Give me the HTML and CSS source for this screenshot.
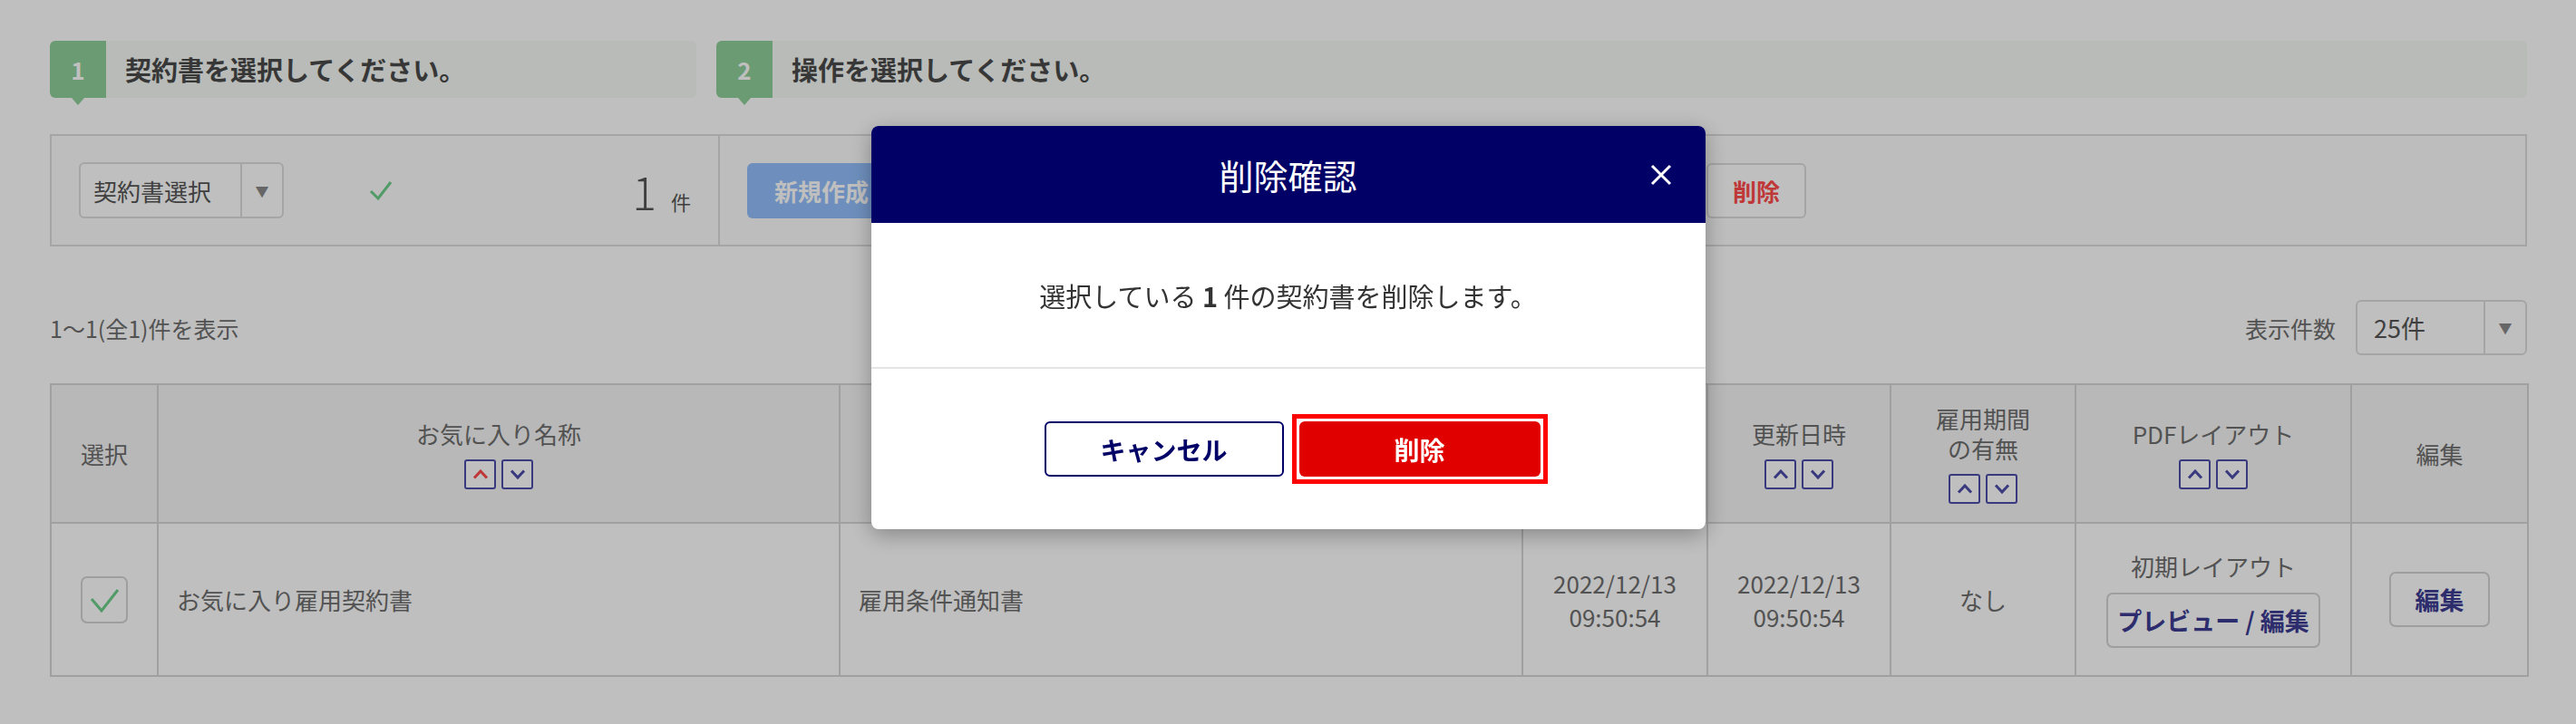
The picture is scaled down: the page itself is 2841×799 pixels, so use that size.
FILE: index.html
```html
<!DOCTYPE html>
<html lang="ja">
<head>
    <meta charset="UTF-8">
    <meta name="viewport" content="width=device-width, initial-scale=1.0">
    <title>契約書一覧</title>
    <link rel="stylesheet" href="styles.css">
</head>
<body>
    <div class="page">
        <div class="steps">
            <div class="step step-first">
                <span class="step-num">1</span>
                <span class="step-label">契約書を選択してください。</span>
            </div>
            <div class="step step-second">
                <span class="step-num">2</span>
                <span class="step-label">操作を選択してください。</span>
            </div>
        </div>

        <div class="op-panel">
            <div class="select-area">
                <div class="select-box doc-select">
                    <span class="select-text">契約書選択</span>
                    <span class="select-caret">&#9660;</span>
                </div>
                <svg class="selected-check" width="28" height="24" viewBox="0 0 28 24">
                    <polyline points="3,13 11,21 25,3" fill="none" stroke="#6ccf8a" stroke-width="3"/>
                </svg>
                <div class="count">
                    <span class="count-num">1</span>
                    <span class="count-unit">件</span>
                </div>
            </div>
            <div class="action-area">
                <button class="op-btn op-new">新規作成</button>
                <!-- buttons behind the dialog -->
                <button class="op-btn op-hidden"></button>
                <button class="op-btn op-hidden"></button>
                <button class="op-btn op-hidden"></button>
                <button class="op-btn op-delete">削除</button>
            </div>
        </div>

        <div class="list-info">
            <span>1～1(全1)件を表示</span>
            <div class="per-page">
                <span>表示件数</span>
                <div class="select-box page-select">
                    <span class="select-text">25件</span>
                    <span class="select-caret">&#9660;</span>
                </div>
            </div>
        </div>

        <table class="doc-table">
            <colgroup>
                <col style="width: 118px">
                <col style="width: 752px">
                <col style="width: 753px">
                <col style="width: 204px">
                <col style="width: 202px">
                <col style="width: 204px">
                <col style="width: 304px">
                <col style="width: 195px">
            </colgroup>
            <thead>
                <tr>
                    <th>選択</th>
                    <th>
                        <div class="head-label">お気に入り名称</div>
                        <div class="sort">
                            <span class="sort-btn"><svg width="18" height="11" viewBox="0 0 18 11"><polyline points="2,9.5 9,2 16,9.5" fill="none" stroke="#ff4a4a" stroke-width="3"/></svg></span>
                            <span class="sort-btn"><svg width="18" height="11" viewBox="0 0 18 11"><polyline points="2,1.5 9,9 16,1.5" fill="none" stroke="#4d4daa" stroke-width="3"/></svg></span>
                        </div>
                    </th>
                    <th>
                        <div class="head-label">契約書名</div>
                        <div class="sort">
                            <span class="sort-btn"><svg width="18" height="11" viewBox="0 0 18 11"><polyline points="2,9.5 9,2 16,9.5" fill="none" stroke="#4d4daa" stroke-width="3"/></svg></span>
                            <span class="sort-btn"><svg width="18" height="11" viewBox="0 0 18 11"><polyline points="2,1.5 9,9 16,1.5" fill="none" stroke="#4d4daa" stroke-width="3"/></svg></span>
                        </div>
                    </th>
                    <th>
                        <div class="head-label">作成日時</div>
                        <div class="sort">
                            <span class="sort-btn"><svg width="18" height="11" viewBox="0 0 18 11"><polyline points="2,9.5 9,2 16,9.5" fill="none" stroke="#4d4daa" stroke-width="3"/></svg></span>
                            <span class="sort-btn"><svg width="18" height="11" viewBox="0 0 18 11"><polyline points="2,1.5 9,9 16,1.5" fill="none" stroke="#4d4daa" stroke-width="3"/></svg></span>
                        </div>
                    </th>
                    <th>
                        <div class="head-label">更新日時</div>
                        <div class="sort">
                            <span class="sort-btn"><svg width="18" height="11" viewBox="0 0 18 11"><polyline points="2,9.5 9,2 16,9.5" fill="none" stroke="#4d4daa" stroke-width="3"/></svg></span>
                            <span class="sort-btn"><svg width="18" height="11" viewBox="0 0 18 11"><polyline points="2,1.5 9,9 16,1.5" fill="none" stroke="#4d4daa" stroke-width="3"/></svg></span>
                        </div>
                    </th>
                    <th>
                        <div class="head-label">雇用期間<br>の有無</div>
                        <div class="sort">
                            <span class="sort-btn"><svg width="18" height="11" viewBox="0 0 18 11"><polyline points="2,9.5 9,2 16,9.5" fill="none" stroke="#4d4daa" stroke-width="3"/></svg></span>
                            <span class="sort-btn"><svg width="18" height="11" viewBox="0 0 18 11"><polyline points="2,1.5 9,9 16,1.5" fill="none" stroke="#4d4daa" stroke-width="3"/></svg></span>
                        </div>
                    </th>
                    <th>
                        <div class="head-label">PDFレイアウト</div>
                        <div class="sort">
                            <span class="sort-btn"><svg width="18" height="11" viewBox="0 0 18 11"><polyline points="2,9.5 9,2 16,9.5" fill="none" stroke="#4d4daa" stroke-width="3"/></svg></span>
                            <span class="sort-btn"><svg width="18" height="11" viewBox="0 0 18 11"><polyline points="2,1.5 9,9 16,1.5" fill="none" stroke="#4d4daa" stroke-width="3"/></svg></span>
                        </div>
                    </th>
                    <th>編集</th>
                </tr>
            </thead>
            <tbody>
                <tr>
                    <td>
                        <span class="check-box">
                            <svg width="34" height="28" viewBox="0 0 34 28"><polyline points="3,13 14,26 32,3" fill="none" stroke="#6ccf8a" stroke-width="3"/></svg>
                        </span>
                    </td>
                    <td class="cell-left">お気に入り雇用契約書</td>
                    <td class="cell-left">雇用条件通知書</td>
                    <td class="cell-date">2022/12/13<br>09:50:54</td>
                    <td class="cell-date">2022/12/13<br>09:50:54</td>
                    <td>なし</td>
                    <td>
                        <div class="layout-name">初期レイアウト</div>
                        <button class="row-btn preview-btn">プレビュー / 編集</button>
                    </td>
                    <td><button class="row-btn edit-btn">編集</button></td>
                </tr>
            </tbody>
        </table>
    </div>

    <div class="overlay"></div>

    <div class="modal">
        <div class="modal-head">
            <span class="modal-title">削除確認</span>
            <svg class="modal-close" width="24" height="24" viewBox="0 0 24 24">
                <path d="M2 2 L22 22 M22 2 L2 22" stroke="#fff" stroke-width="3" fill="none"/>
            </svg>
        </div>
        <div class="modal-body">
            <p>選択している <b>1</b> 件の契約書を削除します。</p>
        </div>
        <div class="modal-foot">
            <button class="btn-cancel">キャンセル</button>
            <span class="highlight"><button class="btn-delete">削除</button></span>
        </div>
    </div>
</body>
</html>
```

FILE: styles.css
```css
body {
    margin: 0;
    background: #fff;
    font-family: "Noto Sans CJK JP", "Noto Sans", sans-serif;
    color: #6e6e6e;
}

.page {
    padding: 45px 54px 0 55px;
}

/* step bars */
.steps {
    display: flex;
    gap: 22px;
}

.step {
    display: flex;
    align-items: center;
    height: 63px;
    background: #f6faf6;
    border-radius: 6px;
}

.step-first {
    width: 713px;
}

.step-second {
    flex: 1;
}

.step-num {
    position: relative;
    width: 62px;
    height: 100%;
    display: flex;
    align-items: center;
    justify-content: center;
    background: #8fcf98;
    color: #fff;
    font-size: 26px;
    font-weight: bold;
    border-radius: 6px 0 0 6px;
}

.step-num::after {
    content: "";
    position: absolute;
    left: 50%;
    bottom: -8px;
    margin-left: -7px;
    border-left: 7px solid transparent;
    border-right: 7px solid transparent;
    border-top: 8px solid #8fcf98;
}

.step-label {
    margin-left: 21px;
    font-size: 29px;
    line-height: 1.2;
    font-weight: bold;
    color: #4a4a4a;
}

/* operation panel */
.op-panel {
    display: flex;
    margin-top: 40px;
    height: 120px;
    border: 2px solid #dcdcdc;
    background: #fcfcfc;
}

.select-area {
    box-sizing: border-box;
    width: 737px;
    display: flex;
    align-items: center;
    padding: 0 30px;
    border-right: 2px solid #dcdcdc;
}

.select-box {
    box-sizing: border-box;
    display: flex;
    height: 62px;
    border: 2px solid #dcdcdc;
    border-radius: 6px;
    background: #fff;
}

.select-text {
    flex: 1;
    display: flex;
    align-items: center;
    padding-left: 14px;
    font-size: 26px;
    color: #555;
}

.select-caret {
    width: 44px;
    display: flex;
    align-items: center;
    justify-content: center;
    border-left: 2px solid #dcdcdc;
    color: #888;
    font-size: 15px;
}

.doc-select {
    width: 226px;
}

.selected-check {
    margin-left: 93px;
}

.count {
    margin-left: auto;
    display: flex;
    align-items: baseline;
    color: #555;
    line-height: 1;
}

.count-num {
    font-size: 50px;
    font-weight: 300;
}

.count-unit {
    margin-left: 16px;
    font-size: 22px;
}

.action-area {
    display: flex;
    align-items: center;
    gap: 15px;
    padding-left: 30px;
}

.op-btn {
    height: 61px;
    border: 2px solid #dcdcdc;
    border-radius: 6px;
    background: #fff;
    font-family: inherit;
    font-size: 26px;
    font-weight: bold;
    color: #555;
}

.op-new {
    width: 164px;
    border: none;
    background: #93bffd;
    color: #fff;
}

.op-hidden {
    width: 278px;
}

.op-delete {
    width: 110px;
    color: #ff4a4a;
}

/* list info */
.list-info {
    display: flex;
    align-items: center;
    justify-content: space-between;
    margin-top: 59px;
    font-size: 25px;
}

.per-page {
    display: flex;
    align-items: center;
    gap: 22px;
}

.page-select {
    width: 189px;
    height: 61px;
}

.page-select .select-text {
    padding-left: 18px;
    font-size: 27px;
}

/* table */
.doc-table {
    margin-top: 31px;
    width: 100%;
    table-layout: fixed;
    border-collapse: collapse;
    background: #fff;
}

.doc-table th,
.doc-table td {
    border: 2px solid #d6d6d6;
    font-size: 26px;
    color: #6e6e6e;
    text-align: center;
    padding: 0;
}

.doc-table th {
    height: 151px;
    font-weight: normal;
    background: #f6f6f6;
    line-height: 33px;
}

.doc-table td {
    height: 167px;
}

.sort {
    display: flex;
    justify-content: center;
    gap: 6px;
    margin-top: 12px;
}

.sort-btn {
    box-sizing: border-box;
    width: 35px;
    height: 33px;
    display: flex;
    align-items: center;
    justify-content: center;
    border: 2px solid #4d4daa;
    border-radius: 3px;
    background: #fff;
}

.cell-left.cell-left {
    text-align: left;
    padding-left: 20px;
}

.cell-date {
    line-height: 37px;
}

.check-box {
    box-sizing: border-box;
    width: 52px;
    height: 52px;
    display: inline-flex;
    align-items: center;
    justify-content: center;
    vertical-align: middle;
    border: 2px solid #d3d3d3;
    border-radius: 7px;
    background: #fff;
}

.layout-name {
    line-height: 34px;
    margin-bottom: 12px;
}

.row-btn {
    height: 61px;
    border: 2px solid #d3d3d3;
    border-radius: 7px;
    background: #fff;
    font-family: inherit;
    font-size: 27px;
    font-weight: bold;
    color: #3c3c93;
}

.preview-btn {
    width: 236px;
}

.edit-btn {
    width: 111px;
}

/* modal */
.overlay {
    position: fixed;
    inset: 0;
    background: rgba(0, 0, 0, 0.25);
}

.modal {
    position: fixed;
    top: 139px;
    left: 50%;
    width: 920px;
    transform: translateX(-50%);
    background: #fff;
    border-radius: 8px;
    overflow: hidden;
    box-shadow: 0 6px 24px rgba(0, 0, 0, 0.3);
}

.modal-head {
    height: 107px;
    display: grid;
    grid-template-columns: 1fr auto 1fr;
    align-items: center;
    background: #000066;
}

.modal-title {
    grid-column: 2;
    color: #fff;
    font-size: 38px;
}

.modal-close {
    grid-column: 3;
    justify-self: end;
    margin-right: 37px;
}

.modal-body {
    height: 159px;
    display: flex;
    align-items: center;
    justify-content: center;
    border-bottom: 2px solid #e4e4e4;
    font-size: 29px;
    color: #333;
}

.modal-body p {
    margin: 0;
}

.modal-foot {
    height: 177px;
    display: flex;
    align-items: center;
    justify-content: center;
    gap: 9px;
    padding-left: 17px;
}

.highlight {
    display: flex;
    padding: 3px;
    border: 5px solid #ff0000;
    background: #fff;
}

.btn-cancel,
.btn-delete {
    height: 61px;
    border-radius: 6px;
    font-family: inherit;
    font-size: 28px;
    font-weight: bold;
}

.btn-cancel {
    width: 264px;
    border: 2px solid #000066;
    background: #fff;
    color: #000066;
}

.btn-delete {
    width: 266px;
    border: none;
    background: #e00000;
    color: #fff;
}
```
